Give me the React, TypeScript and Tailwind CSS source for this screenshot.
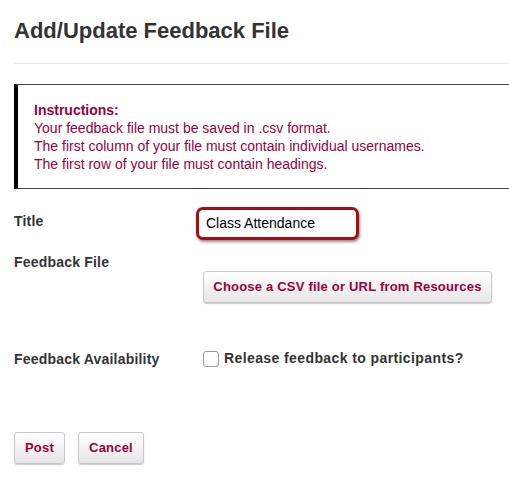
import React from "react";

const crimson = "text-[#99003d]";

function Label({ children }: { children: React.ReactNode }) {
  return (
    <div className="w-[182px] shrink-0 text-[14px] leading-[16px] font-bold tracking-[0.2px] text-[#333]">
      {children}
    </div>
  );
}

function GrayButton({ children, className = "" }: { children: React.ReactNode; className?: string }) {
  return (
    <button
      className={`h-[32px] whitespace-nowrap rounded-[3px] border border-[#c8c8c8] bg-gradient-to-b from-[#ffffff] to-[#e6e6e6] text-[13px] font-bold tracking-[0.2px] ${crimson} shadow-[0_1px_1px_rgba(0,0,0,0.2)] ${className}`}
    >
      {children}
    </button>
  );
}

export default function App() {
  return (
    <div className="h-[484px] w-[509px] overflow-hidden bg-white pl-[14px] font-['Liberation_Sans',Arial,sans-serif]">
      <h1 className="pt-[18px] text-[22px] leading-[26px] font-bold text-[#333]">Add/Update Feedback File</h1>
      <div className="mt-[19px] h-px w-[520px] bg-[#e8e8e8]" />

      <div className="mt-[20px] w-[520px] border-y border-r border-[#444] border-l-[4px] border-l-black pt-[16px] pb-[15px] pl-[16px] text-[14px] leading-[18px] text-[#99003d]">
        <div className="font-bold">Instructions:</div>
        <div>Your feedback file must be saved in .csv format.</div>
        <div>The first column of your file must contain individual usernames.</div>
        <div>The first row of your file must contain headings.</div>
      </div>

      <div className="mt-[18px] flex items-start">
        <Label>
          <div className="pt-[6px]">Title</div>
        </Label>
        <div className="h-[33px] w-[163px] rounded-[7px] border-[3px] border-[#a50e14] bg-white pl-[7px] text-[14px] leading-[27px] text-black shadow-[1px_2px_3px_rgba(0,0,0,0.45)]">
          Class Attendance
        </div>
      </div>

      <div className="mt-[14px]">
        <Label>Feedback File</Label>
      </div>
      <div className="mt-[1px] pl-[189px]">
        <GrayButton className="w-[289px]">Choose a CSV file or URL from Resources</GrayButton>
      </div>

      <div className="mt-[45px] flex items-center">
        <Label>Feedback Availability</Label>
        <div className="ml-[7px] flex items-center">
          <span className="h-[16px] w-[16px] rounded-[3px] border border-[#999] bg-white" />
          <span className="ml-[5px] text-[14px] font-bold tracking-[0.4px] text-[#333]">
            Release feedback to participants?
          </span>
        </div>
      </div>

      <div className="mt-[63px] flex gap-[13px]">
        <GrayButton className="w-[51px]">Post</GrayButton>
        <GrayButton className="w-[66px]">Cancel</GrayButton>
      </div>
    </div>
  );
}
